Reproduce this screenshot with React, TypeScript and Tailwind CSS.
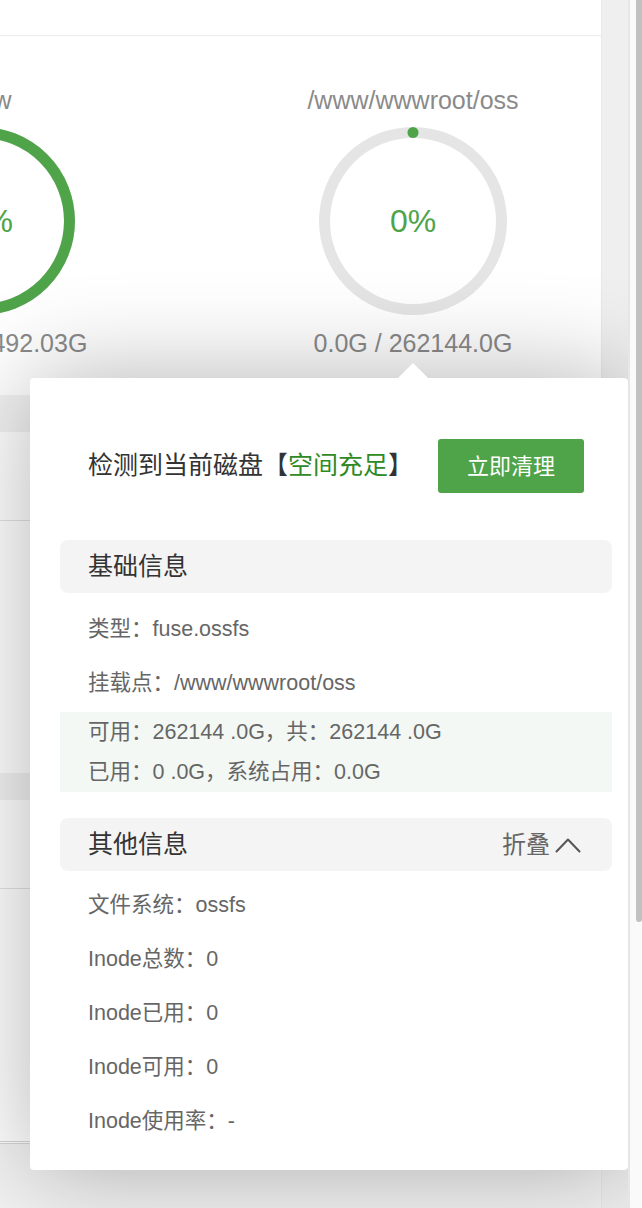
type Disk = {
  path: string
  percent: number
  used: string
  total: string
}

const DISKS: Disk[] = [
  { path: '/www', percent: 95, used: '467.43G', total: '492.03G' },
  { path: '/www/wwwroot/oss', percent: 0, used: '0.0G', total: '262144.0G' },
]

const BASE_ROWS = ['类型：fuse.ossfs', '挂载点：/www/wwwroot/oss']
const USAGE_ROWS = ['可用：262144 .0G，共：262144 .0G', '已用：0 .0G，系统占用：0.0G']
const OTHER_ROWS = ['文件系统：ossfs', 'Inode总数：0', 'Inode已用：0', 'Inode可用：0', 'Inode使用率：-']

function Ring({ percent }: { percent: number }) {
  const r = 88.5
  const c = 2 * Math.PI * r
  const len = Math.max((percent / 100) * c, 0.01)
  return (
    <svg width="188" height="188" viewBox="0 0 188 188">
      <circle cx="94" cy="94" r={r} fill="none" stroke="#e5e5e5" strokeWidth="11" />
      <circle
        cx="94"
        cy="94"
        r={r}
        fill="none"
        stroke="#4fa44a"
        strokeWidth="11"
        strokeLinecap="round"
        strokeDasharray={`${len} ${c}`}
        transform="rotate(-90 94 94)"
      />
    </svg>
  )
}

function DiskChart({ disk }: { disk: Disk }) {
  return (
    <div className="flex w-[240px] shrink-0 flex-col items-center">
      <div className="h-[30px] whitespace-nowrap text-[25px] leading-[30px] text-[#8a8a8a]">{disk.path}</div>
      <div className="relative mt-[12px] h-[188px] w-[188px]">
        <Ring percent={disk.percent} />
        {/* percent label sits over the ring */}
        <div className="absolute inset-0 flex items-center justify-center text-[32px] text-[#4fa44a]">
          {disk.percent}%
        </div>
      </div>
      <div className="mt-[13px] h-[30px] whitespace-nowrap text-[25px] leading-[30px] text-[#8a8a8a]">
        {disk.used} / {disk.total}
      </div>
    </div>
  )
}

function TableBlock() {
  return (
    <div className="flex flex-col bg-white">
      <div className="h-[27px] bg-[#f2f2f2]" />
      <div className="h-[89px] border-b border-[#e3e3e3]" />
    </div>
  )
}

export default function App() {
  return (
    <div className="relative h-[1208px] w-[642px] overflow-hidden bg-[#f2f2f2] font-['Liberation_Sans','Noto_Sans_CJK_SC',sans-serif]">
      <div className="flex h-full">
        {/* page content behind the popover */}
        <div className="flex w-[601px] shrink-0 flex-col">
          <div className="h-[395px] bg-white">
            <div className="h-[36px] border-b border-[#ececec]" />
            <div className="ml-[-139px] flex gap-[192px] pt-[49px]">
              {DISKS.map(d => (
                <DiskChart key={d.path} disk={d} />
              ))}
            </div>
          </div>
          <div className="mt-[10px] flex flex-col bg-white">
            <TableBlock />
            <div className="h-[252px]" />
            <TableBlock />
            <div className="h-[255px] border-b-[3px] border-double border-[#d6d6d6]" />
          </div>
        </div>
        <div className="w-[27px] shrink-0 border-l border-[#e8e8e8] bg-[#efefef]" />
        {/* scrollbar */}
        <div className="relative z-20 flex w-[14px] shrink-0 justify-end border-l-2 border-[#e6e6e6] bg-[#fafafa]">
          <div className="h-[922px] w-[6px] rounded-b-[4px] bg-[#c1c1c1]" />
        </div>
      </div>

      {/* disk detail popover */}
      <div className="absolute left-[30px] top-[378px] z-10 flex h-[792px] w-[598px] flex-col rounded-[4px] bg-white pl-[30px] pr-[16px] pt-[61px] shadow-[0_0_100px_rgba(0,0,0,0.3)]">
        <div className="absolute left-[367px] top-[-15px] h-0 w-0 border-x-[16px] border-b-[16px] border-x-transparent border-b-white" />

        <div className="flex items-center justify-between px-[28px]">
          <div className="text-[25px] text-[#333]">
            检测到当前磁盘【<span className="text-[#2f8a25]">空间充足</span>】
          </div>
          <button className="h-[54px] w-[146px] rounded-[3px] bg-[#4fa44a] text-[22px] text-white">立即清理</button>
        </div>

        <div className="mt-[47px] flex h-[53px] items-center rounded-[8px] bg-[#f4f4f4] px-[28px] text-[25px] text-[#333]">
          基础信息
        </div>
        <div className="flex flex-col pt-[9px]">
          {BASE_ROWS.map(r => (
            <div key={r} className="flex h-[54px] items-center px-[28px] text-[21.5px] text-[#666]">
              {r}
            </div>
          ))}
        </div>
        <div className="mt-[2px] flex flex-col bg-[#f3f8f4]">
          {USAGE_ROWS.map(r => (
            <div key={r} className="flex h-[40px] items-center px-[28px] text-[21.5px] text-[#666]">
              {r}
            </div>
          ))}
        </div>

        <div className="mt-[26px] flex h-[53px] items-center justify-between rounded-[8px] bg-[#f4f4f4] pl-[28px] pr-[31px] text-[25px] text-[#333]">
          <span>其他信息</span>
          <span className="flex items-center gap-[5px] text-[24px] text-[#666]">
            折叠
            <svg width="26" height="16" viewBox="0 0 26 16" fill="none">
              <polyline points="1.5,14.5 13,2.5 24.5,14.5" stroke="#555" strokeWidth="2" strokeLinecap="round" strokeLinejoin="round" />
            </svg>
          </span>
        </div>
        <div className="flex flex-col pt-[7px]">
          {OTHER_ROWS.map(r => (
            <div key={r} className="flex h-[54px] items-center px-[28px] text-[21.5px] text-[#666]">
              {r}
            </div>
          ))}
        </div>
      </div>
    </div>
  )
}
